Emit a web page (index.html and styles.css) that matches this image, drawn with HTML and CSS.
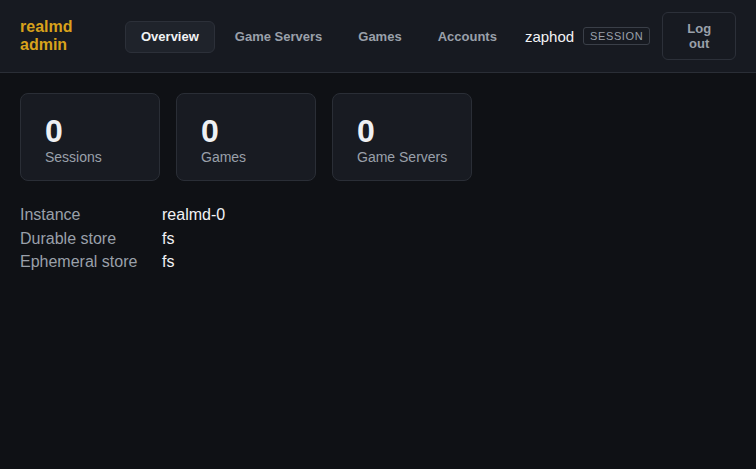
FILE: index.html
```html
<!DOCTYPE html>
<html lang="en">
<head>
  <meta charset="UTF-8" />
  <title>realmd admin</title>
  <link rel="stylesheet" href="styles.css">
</head>
<body>

  <header class="topbar">
    <div class="brand">realmd<br>admin</div>
    <nav class="nav">
      <a href="#" class="nav-link active">Overview</a>
      <a href="#" class="nav-link">Game Servers</a>
      <a href="#" class="nav-link">Games</a>
      <a href="#" class="nav-link">Accounts</a>
    </nav>
    <div class="user">
      <span class="user-name">zaphod</span>
      <span class="badge">SESSION</span>
      <button class="logout">Log<br>out</button>
    </div>
  </header>

  <main class="content">
    <div class="stats">
      <div class="stat">
        <div class="stat-value">0</div>
        <div class="stat-label">Sessions</div>
      </div>
      <div class="stat">
        <div class="stat-value">0</div>
        <div class="stat-label">Games</div>
      </div>
      <div class="stat">
        <div class="stat-value">0</div>
        <div class="stat-label">Game Servers</div>
      </div>
    </div>

    <dl class="info">
      <dt>Instance</dt><dd>realmd-0</dd>
      <dt>Durable store</dt><dd>fs</dd>
      <dt>Ephemeral store</dt><dd>fs</dd>
    </dl>
  </main>

</body>
</html>
```

FILE: styles.css
```css
* {
  box-sizing: border-box;
}

body {
  margin: 0;
  background-color: #0f1115;
  color: #e6e8eb;
  font-family: "Liberation Sans", Arial, sans-serif;
}

.topbar {
  display: flex;
  align-items: center;
  height: 73px;
  padding: 12px 20px;
  background-color: #171a21;
  border-bottom: 1px solid #2a2e36;
}

.brand {
  flex: none;
  color: #d9a21b;
  font-weight: bold;
  font-size: 16px;
  line-height: 18px;
  width: 105px;
}

.nav {
  display: flex;
  align-items: center;
  gap: 4px;
  padding-top: 1px;
}

.nav-link {
  color: #9aa0aa;
  text-decoration: none;
  font-weight: bold;
  font-size: 13px;
  white-space: nowrap;
  padding: 8px 15px;
  line-height: 14px;
  border: 1px solid transparent;
  border-radius: 6px;
}

.nav-link.active {
  color: #f2f3f5;
  background-color: #1f232b;
  border-color: #2c3039;
}

.user {
  display: flex;
  align-items: center;
  margin-left: 12px;
}

.user-name {
  font-size: 15px;
  color: #f2f3f5;
}

.badge {
  margin-left: 9px;
  font-size: 11px;
  letter-spacing: 0.6px;
  color: #9aa0aa;
  border: 1px solid #3a3f48;
  border-radius: 3px;
  padding: 2px 6px;
  line-height: 12px;
}

.logout {
  margin-left: 12px;
  width: 74px;
  height: 48px;
  background: transparent;
  color: #9aa0aa;
  font-family: inherit;
  font-weight: bold;
  font-size: 13px;
  line-height: 15px;
  border: 1px solid #2c3039;
  border-radius: 6px;
}

.content {
  padding: 20px;
}

.stats {
  display: flex;
  gap: 16px;
}

.stat {
  width: 140px;
  height: 88px;
  padding: 19px 12px 19px 24px;
  background-color: #181b22;
  border: 1px solid #2a2e36;
  border-radius: 8px;
}

.stat-value {
  font-size: 32px;
  font-weight: bold;
  line-height: 36px;
  color: #eef0f3;
}

.stat-label {
  font-size: 14px;
  white-space: nowrap;
  color: #9aa0aa;
}

.info {
  display: grid;
  grid-template-columns: 142px 1fr;
  margin: 22px 0 0;
  font-size: 16px;
  line-height: 23.5px;
}

.info dt {
  color: #9aa0aa;
}

.info dd {
  margin: 0;
  color: #f2f3f5;
}
```
